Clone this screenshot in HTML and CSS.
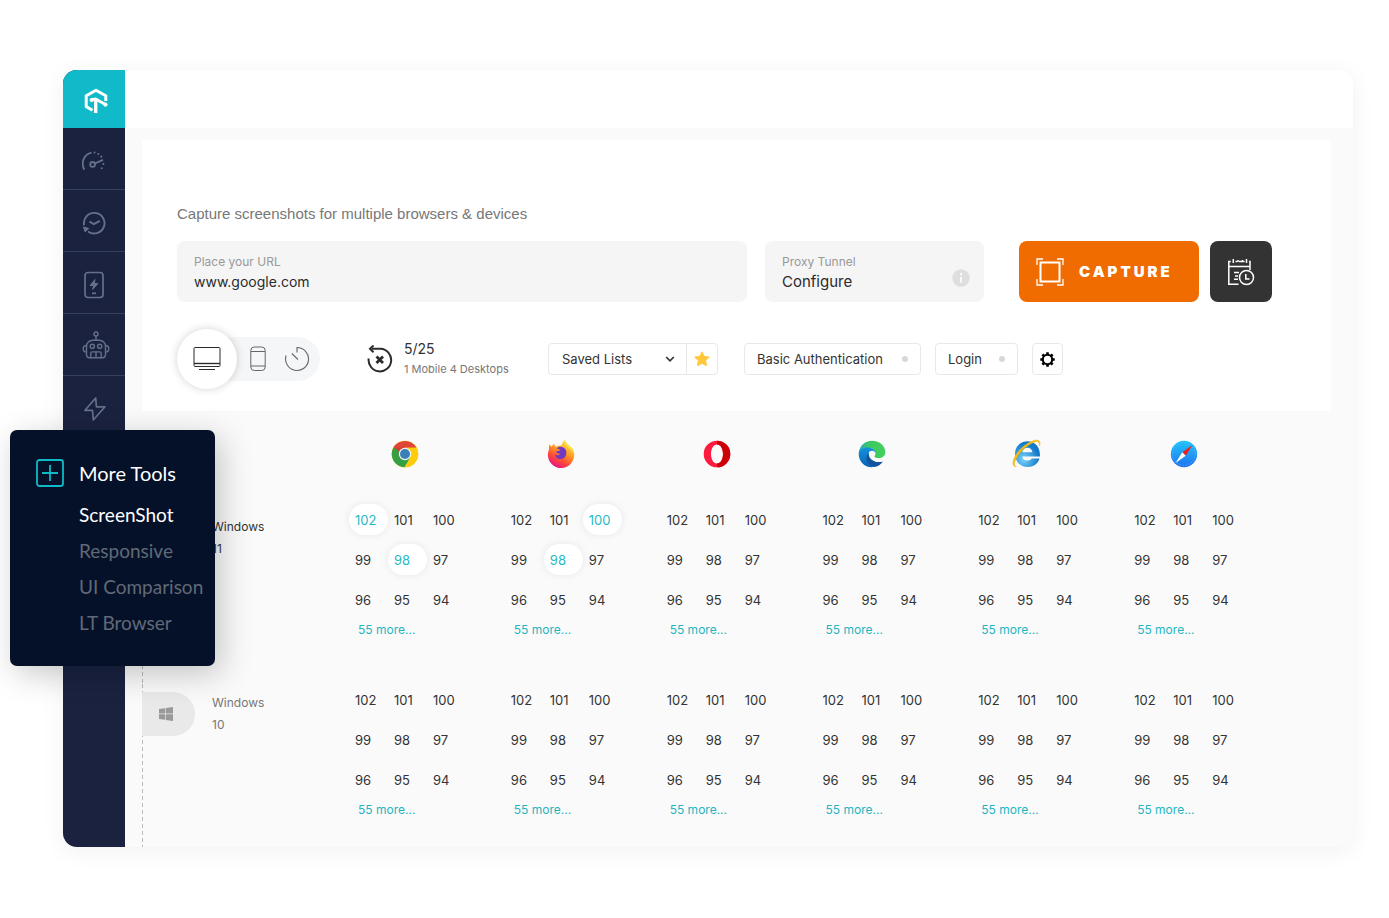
FILE: index.html
```html
<!DOCTYPE html>
<html lang="en">
<head>
<meta charset="utf-8">
<meta name="viewport" content="width=device-width, initial-scale=1">
<title>Screenshot capture</title>
<link rel="stylesheet" href="styles.css">
</head>
<body>
<div class="app">
  <aside class="sidebar">
    <a class="brand" href="#" aria-label="Home">
      <svg width="24" height="26" viewBox="0 0 24 26" fill="none" stroke="#fff" stroke-width="3" stroke-linejoin="round">
        <path d="M8.500 22.300 2.200 18.600V7.700L12 2.200l9.800 5.500v5.300" />
        <path d="M11.700 25V12.500" stroke-width="3.400"/>
        <path d="M7.300 12 11.700 11l9.300 5.300" stroke-width="3"/>
        <circle cx="7.600" cy="12" r="1.600" fill="#fff" stroke-width="1"/>
        <circle cx="21.400" cy="16.600" r="1.700" fill="#fff" stroke-width="1"/>
      </svg>
    </a>
    <nav class="rail">
      <a class="rail-item" href="#" aria-label="Dashboard">
        <svg width="24" height="20" viewBox="1 0 24 20" fill="none" stroke="currentColor" stroke-width="1.800" stroke-linecap="round">
          <path d="M3 18C-.2 11.500 3 3.500 9.800 1.800"/>
          <path d="M13.500 1.400v.1M17.300 2.900v.1M20.300 5.600v.1M22.400 13v.1M20.700 17.200v.1" stroke-width="2"/>
          <circle cx="11.600" cy="13.400" r="2.400"/>
          <path d="m14 12.400 7.500-3.200"/>
        </svg>
      </a>
      <a class="rail-item" href="#" aria-label="Real time testing">
        <svg width="24" height="24" viewBox="0 0 24 24" fill="none" stroke="currentColor" stroke-width="1.900">
          <path d="M2.100 14.200A10.300 10.300 0 1 1 6 20.400"/>
          <path d="m7.500 10.500 4.300 2.700 6-3.400" stroke-width="2"/>
          <path d="m1.500 16 5.300 1.500-3.800 3.300z" fill="currentColor" stroke-width="1"/>
        </svg>
      </a>
      <a class="rail-item" href="#" aria-label="App testing">
        <svg width="20" height="28" viewBox="0 0 20 28" fill="none" stroke="currentColor" stroke-width="1.700">
          <rect x="1" y="1.500" width="18" height="25" rx="3"/>
          <path d="m11 8.500-5 6h3.500l-.8 4 5.200-6H10.300z" fill="currentColor" stroke-width="1"/>
          <path d="M8 22.300h4"/>
        </svg>
      </a>
      <a class="rail-item" href="#" aria-label="Automation">
        <svg width="32" height="32" viewBox="0 0 32 32" fill="none" stroke="currentColor" stroke-width="1.400">
          <g transform="translate(4 0)">
            <circle cx="14" cy="3" r="2"/>
            <path d="M14 5v4M4.500 24V15.500a6.300 6.300 0 0 1 6.300-6.300h6.400a6.300 6.300 0 0 1 6.300 6.300v8.200a3 3 0 0 1-3 3h-13a3 3 0 0 1-3-3"/>
            <path d="M4.500 14.500c-2 0-3.300 1-3.300 3.200s1.300 3.300 3.300 3.300M23.500 14.500c2 0 3.300 1 3.300 3.200S25.500 21 23.500 21"/>
            <circle cx="10.300" cy="15.300" r="2.100"/><circle cx="17.700" cy="15.300" r="2.100"/>
            <path d="M8.800 26.500v-4.300c0-.8.500-1.300 1.300-1.300h7.800c.8 0 1.300.5 1.300 1.300v4.300M14 21v5.500"/>
          </g>
        </svg>
      </a>
      <a class="rail-item" href="#" aria-label="HyperExecute">
        <svg width="24" height="26" viewBox="-1 0 24 26" fill="none" stroke="currentColor" stroke-width="1.700" stroke-linejoin="round">
          <path d="M12.700 2 2 14.300h7.500L10.300 24 22 10.800h-8.600z"/>
        </svg>
      </a>
    </nav>
    <section class="flyout">
      <svg class="flyout-icon" width="28" height="28" viewBox="0 0 28 28" fill="none" stroke="#0ebac5" stroke-width="1.800">
        <rect x="1" y="1" width="26" height="26" rx="2.500"/>
        <path d="M14 6v16M6 14h16"/>
      </svg>
      <h2 class="flyout-title">More Tools</h2>
      <nav class="flyout-links">
        <a class="flyout-link is-current" href="#">ScreenShot</a>
        <a class="flyout-link" href="#">Responsive</a>
        <a class="flyout-link" href="#">UI Comparison</a>
        <a class="flyout-link" href="#">LT Browser</a>
      </nav>
    </section>
  </aside>

  <div class="main">
    <header class="topbar"></header>
    <main class="content">
      <form class="panel">
        <p class="panel-title">Capture screenshots for multiple browsers &amp; devices</p>
        <div class="capture-row">
          <div class="field field-url">
            <label class="field-label" for="url">Place your URL</label>
            <input class="field-input" id="url" type="text" value="www.google.com">
          </div>
          <div class="field field-proxy">
            <div class="field-body">
              <label class="field-label" for="proxy">Proxy Tunnel</label>
              <button class="field-input" id="proxy" type="button">Configure</button>
            </div>
            <svg width="18" height="18" viewBox="0 0 18 18" aria-hidden="true">
              <circle cx="9" cy="9" r="8.700" fill="#dededf"/>
              <path d="M9 7.800v6" stroke="#fff" stroke-width="1.600"/><circle cx="9" cy="5.200" r="1.100" fill="#fff"/>
            </svg>
          </div>
          <button class="capture" type="button">
            <svg width="28" height="28" viewBox="0 0 28 28" fill="none" stroke="#fff">
              <rect x="4.500" y="4.500" width="19" height="19" stroke-width="2"/>
              <path d="M1 7V1h6M21 1h6v6M27 21v6h-6M7 27H1v-6" stroke-width="1.300"/>
            </svg>
            <span>CAPTURE</span>
          </button>
          <button class="schedule" type="button" aria-label="Schedule">
            <svg width="28" height="28" viewBox="0 0 28 28" fill="none" stroke="#fff" stroke-width="1.500">
              <path d="M11.500 26.200H1.800V3.500h2M22 3.500h1v8.500M1.800 8.500h21M8.500 3.500h2M12 3.500h5.500"/>
              <path d="M6.300 1v4M11 2v2M15.500 2v2M19.500 1v4"/>
              <path d="M7 14.500h5M8 18h3M7 21.300h4"/>
              <circle cx="19.500" cy="19.500" r="7"/>
              <path d="M18.800 16v5h3.700"/>
            </svg>
          </button>
        </div>

        <div class="options-row">
          <div class="devices">
            <button class="device is-active" type="button" aria-label="Desktop" aria-pressed="true">
              <svg width="28" height="26" viewBox="0 0 28 26" fill="none" stroke="#2b2b2b">
                <rect x="1" y="1.500" width="26" height="19" rx="1"/>
                <path d="M1 17.500h26" stroke-width="1.400"/><path d="M6 23.500h16" stroke-width="1"/>
              </svg>
            </button>
            <button class="device" type="button" aria-label="Mobile">
              <svg width="16" height="26" viewBox="0 0 16 26" fill="none" stroke="#666">
                <rect x=".8" y="1" width="14.400" height="23.500" rx="3.500"/><path d="M1 5.500h14M1 20h14"/>
              </svg>
            </button>
            <button class="device" type="button" aria-label="Timer">
              <svg width="26" height="26" viewBox="0 0 26 26" fill="none" stroke="#666" stroke-width="1.100">
                <path d="M13 6.500V1.500A11.500 11.500 0 1 1 2.100 9.500M7.800 7.500l6.200 6"/>
              </svg>
            </button>
          </div>

          <div class="quota">
            <svg width="26" height="28" viewBox="0 0 26 28" fill="none" stroke="#2b2b2b" stroke-width="2">
              <path d="M5 3.800h8.500a11.300 11.300 0 1 1-11.800 9.700"/>
              <path d="M6.500.500 3 3.800l3.500 3.400"/>
              <path d="m9.500 11.500 6.500 6.500M16 11.500 9.500 18" stroke-width="2.800"/>
            </svg>
            <div class="quota-text">
              <span class="quota-count">5/25</span>
              <span class="quota-detail">1 Mobile 4 Desktops</span>
            </div>
          </div>

          <div class="saved">
            <select class="saved-select" aria-label="Saved Lists"><option>Saved Lists</option></select>
            <svg class="saved-arrow" width="10" height="8" viewBox="0 0 10 8" fill="none" stroke="#333" stroke-width="1.700"><path d="m1.200 2 3.800 3.800L8.800 2"/></svg>
            <button class="saved-star" type="button" aria-label="Favourite">
              <svg width="16" height="16" viewBox="0 0 16 16" fill="#ffc83c" stroke="#ffc83c" stroke-linejoin="round"><path d="m8 .8 2.200 4.600 5.100.7-3.700 3.500.9 5.100L8 12.300l-4.500 2.400.9-5.100L.7 6.100l5.100-.7z"/></svg>
            </button>
          </div>

          <button class="chip" type="button">Basic Authentication<span class="dot"></span></button>
          <button class="chip chip-login" type="button">Login<span class="dot"></span></button>
          <button class="gear" type="button" aria-label="Settings">
            <svg width="15" height="15" viewBox="0 0 16 16" fill="none" stroke="#000">
              <circle cx="8" cy="8" r="5" stroke-width="2.200"/>
              <path d="M8 .3v3M8 12.700v3M.3 8h3M12.700 8h3M2.600 2.600l1.900 1.900M11.500 11.500l1.900 1.900M13.400 2.600l-1.900 1.900M4.500 11.500l-1.900 1.900" stroke-width="2.800"/>
            </svg>
          </button>
        </div>
      </form>

      <table class="matrix">
        <thead>
          <tr>
            <th class="col-os"></th>
            <th scope="col" aria-label="Chrome">
              <svg class="browser" width="28" height="28" viewBox="0 0 28 28">
                <circle cx="14" cy="14" r="13.300" fill="#fdcc0d"/>
                <path d="M14 14 2.500 7.300A13.300 13.300 0 0 1 25.500 7.700H14z" fill="#e0453a"/>
                <path d="M2.500 7.300A13.300 13.300 0 0 0 13.600 27.300L19.500 17.200 14 14l-5.500 3.200z" fill="#34a045"/>
                <path d="M2.500 7.300 8.500 17.200 14 7.700H2.800z" fill="#d93a30"/>
                <path d="M2.500 7.300 8.500 17.300 11 18 7 10z" fill="#2f9a41"/>
                <path d="M14 7.700h11.600a13.300 13.300 0 0 1-12 19.600l5.900-10z" fill="#fdcc0d"/>
                <circle cx="14" cy="14" r="6.200" fill="#eef3f6"/><circle cx="14" cy="14" r="5" fill="#3b7fb8"/>
              </svg>
            </th>
            <th scope="col" aria-label="Firefox">
              <svg class="browser" width="28" height="28" viewBox="0 0 28 28">
                <defs><linearGradient id="fx" x1=".85" y1=".1" x2=".35" y2="1"><stop offset="0" stop-color="#ffe34a"/><stop offset=".4" stop-color="#ff9a24"/><stop offset=".7" stop-color="#ff4a38"/><stop offset="1" stop-color="#e31587"/></linearGradient></defs>
                <path d="M2.300 3.500c1 .5 1.800 1.300 2.500 2.200.4-1.200 1.200-2.200 2.300-3 .2 1.500 1 2.500 2.300 3 1.700-1.200 3.600-1.500 5.400-1.200C15 2.300 16 .5 18-1c.5 2.500 2 3.700 3.600 5.200C25.600 7.300 27.200 9.500 27.200 13A13.200 13.200 0 1 1 2 8.500C2 6.700 2 5.200 2.300 3.500z" transform="translate(0 1)" fill="url(#fx)"/>
                <path d="M9.500 8.500c2.500-2.500 7-2.200 9 1 1.800 3.200.7 8-3 9.200-4 1.200-7.200-1.200-7.500-4.200 1.700 1.200 4 1 5.500-.5-2.500-.3-3.500-1.500-4.800-1.800.3-1.500 2.500-1.500 4.500-1.800-.5-1.200-2-2-3.700-1.900z" fill="#7139c4"/>
                <path d="M18 0c.5 2.500 2 3.700 3.600 5.200 4 3.100 5.600 5.300 5.600 8.800-1.500-2.500-3.500-4.500-6.500-6.500-3.200-2-3.500-5-2.700-7.500z" fill="#ffdf3f"/>
              </svg>
            </th>
            <th scope="col" aria-label="Opera">
              <svg class="browser" width="28" height="28" viewBox="0 0 28 28">
                <path fill-rule="evenodd" d="M14 .700a13.300 13.300 0 0 1 0 26.600A13.300 13.300 0 0 1 14 .700zm0 3.800c-3.600 0-6 4.200-6 9.500s2.400 9.500 6 9.500 6-4.200 6-9.500-2.400-9.500-6-9.500z" fill="#ff1b3d"/>
                <path fill-rule="evenodd" d="M14 .700a13.300 13.300 0 0 1 0 26.600V23.500c3.600 0 6-4.200 6-9.500s-2.400-9.500-6-9.500z" fill="#cc0006"/>
              </svg>
            </th>
            <th scope="col" aria-label="Edge">
              <svg class="browser" width="28" height="28" viewBox="0 0 28 28">
                <defs>
                  <linearGradient id="eg" x1="0" y1=".5" x2="1" y2=".5"><stop offset="0" stop-color="#22a9c9"/><stop offset=".35" stop-color="#38c765"/><stop offset="1" stop-color="#43d15b"/></linearGradient>
                  <linearGradient id="eb" x1="0" y1="0" x2="0" y2="1"><stop offset="0" stop-color="#1592dc"/><stop offset="1" stop-color="#0a62b4"/></linearGradient>
                </defs>
                <path d="M.700 13C1.300 6 7 .700 14 .700c8 0 13.300 5.500 13.300 11.300 0 4-3 6-6.500 6-3 0-4.500-1-4.500-1.800s1.200-1.200 1.200-3.200c0-3-3-5-7.500-5C5 8 2 10 .700 13z" fill="url(#eg)"/>
                <path d="M.700 14C.700 10 4.500 7.600 9.500 7.600c5 0 8 2.700 8 5.400h-3c-3 0-4.700 2.500-4.700 5.500 0 4 3 7.500 6 8.600C7 28.200.700 21.800.700 14z" fill="url(#eb)"/>
                <path d="M10.300 13c-2.500 3.500-2.300 8 .7 11 1.600 2 3.500 3 4.800 3.100 4-.4 7.500-2.800 9.400-6.200-4 1.900-8 1.500-10.700-.8-2-1.700-3-4-4.200-7.100z" fill="#11539e"/>
                <path d="M10.800 14a3.200 3.200 0 0 1 6.400 0c0 1.300-1.200 1.800-1.200 3 0 1.400 2 2.400 5 2.400 2.200 0 4.500-.6 6-1.500l-.8 3c-3.500 1.300-7.700 1.200-11-.4-3-1.500-4.400-3.700-4.400-6.500z" fill="#fafafa"/>
              </svg>
            </th>
            <th scope="col" aria-label="Internet Explorer">
              <svg class="browser browser-ie" width="28" height="28" viewBox="0 0 28 28">
                <defs><radialGradient id="ie" cx=".35" cy=".7" r=".6"><stop offset="0" stop-color="#79d3fb"/><stop offset="1" stop-color="#1379ca"/></radialGradient></defs>
                <path fill-rule="evenodd" d="M15.500 1.200c7.500 0 12.800 5.500 12.500 15.300H10.300c.3 2.500 2.300 4 5.200 4 2 0 3.500-.8 4.300-2h7.700c-1.500 5.200-6 8.500-12 8.500-7 0-12.500-5.500-12.500-12.900s5.500-12.900 12.500-12.900zM10.400 12.300h10c-.4-2.800-2.300-4.500-5-4.500s-4.600 1.900-5 4.500z" fill="url(#ie)"/>
                <path d="M27.500 5.500C29 2 27-.2 24 .2 17 1 6 9.500 2.300 18c-2.400 5.700-1.300 9 2 8.500C1.500 26 2 22.500 4.500 18 8.500 10.500 17 3.200 24 1.600c2.700-.6 3.700.9 3.500 3.900z" fill="#f6b911" stroke="#f6b911" stroke-width=".7"/>
              </svg>
            </th>
            <th scope="col" aria-label="Safari">
              <svg class="browser" width="28" height="28" viewBox="0 0 28 28">
                <defs><linearGradient id="sf" x1="0" y1="0" x2="0" y2="1"><stop offset="0" stop-color="#20c5fb"/><stop offset="1" stop-color="#2272ef"/></linearGradient></defs>
                <circle cx="14" cy="14" r="13.200" fill="url(#sf)"/>
                <circle cx="14" cy="14" r="11.300" fill="none" stroke="#5cb8fa" stroke-width="1" stroke-dasharray="1 2"/>
                <path d="M22.500 5 12.300 12.300l3.400 3.400z" fill="#f01f1f"/><path d="m5.500 23 10.200-7.300-3.400-3.400z" fill="#fff"/>
              </svg>
            </th>
          </tr>
        </thead>
        <tbody>
          <tr class="os-row" data-selected="0:102 0:98 1:100 1:98">
            <th class="col-os" scope="row"><div class="os is-open"><span class="os-tab"></span><span class="os-name">Windows 11</span></div></th>
          </tr>
          <tr class="os-row" data-selected="">
            <th class="col-os" scope="row"><div class="os">
              <span class="os-tab">
                <svg width="14" height="14" viewBox="0 0 14 14" fill="#999"><path d="M0 2 6 1.200v5.400H0zM6.700 1.100 14 0v6.600H6.700zM0 7.300h6v5.500L0 12zM6.700 7.300H14V14l-7.300-1.100z"/></svg>
              </span>
              <span class="os-name">Windows 10</span></div></th>
          </tr>
        </tbody>
      </table>
    </main>
  </div>
</div>
<script src="script.js"></script>
</body>
</html>
```
FILE: styles.css
```css
* { box-sizing: border-box; }

body {
  margin: 0;
  padding: 70px 36px 71px 63px;
  background: #fff;
  color: #333;
  font-family: Inter, "Liberation Sans", sans-serif;
  font-size: 13px;
}

button, input, select { font: inherit; color: inherit; }
button { padding: 0; border: 0; background: none; cursor: pointer; }
a { text-decoration: none; }
svg { display: block; flex: none; }

.app {
  display: flex;
  border-radius: 14px;
  background: #fafafa;
  box-shadow: 0 4px 24px rgba(0, 0, 0, 0.06);
}

/* Sidebar */
.sidebar {
  position: relative;
  flex: none;
  width: 62px;
  border-radius: 14px 0 0 14px;
  background: #1a2240;
}
.brand {
  display: flex;
  align-items: center;
  justify-content: center;
  height: 58px;
  padding: 4px 0 0 3px;
  border-radius: 14px 0 0 0;
  background: #10bac8;
}
.rail-item {
  display: flex;
  align-items: center;
  justify-content: center;
  height: 62px;
  padding-top: 4px;
  border-bottom: 1px solid #35405a;
  color: #657186;
}
.rail-item:last-child { border-bottom: 0; }

/* Tools menu that opens over the sidebar */
.flyout {
  position: absolute;
  z-index: 2;
  top: 360px;
  left: -53px;
  display: grid;
  grid-template-columns: 28px 1fr;
  gap: 9px 15px;
  align-items: center;
  width: 205px;
  padding: 28px 0 25px 26px;
  border-radius: 7px;
  background: #051129;
  box-shadow: 6px 8px 32px rgba(0, 0, 0, 0.22);
  font-family: Lato, sans-serif;
}
.flyout-title {
  margin: 0;
  color: #fff;
  font-size: 20px;
  font-weight: 400;
  line-height: 30px;
}
.flyout-links { grid-column: 2; display: grid; }
.flyout-link {
  color: #616977;
  font-size: 19px;
  line-height: 36px;
  white-space: nowrap;
}
.flyout-link.is-current { color: #fff; }

/* Capture form */
.main { flex: 1; min-width: 0; }
.topbar {
  height: 58px;
  border-radius: 0 14px 0 0;
  background: #fff;
}
.content { padding: 12px 22px 0 17px; }
.panel {
  padding: 62px 59px 22px 35px;
  background: #fff;
}
.panel-title {
  margin: 0 0 15px;
  color: #777;
  font-family: "Liberation Sans", Arial, sans-serif;
  font-size: 15px;
  line-height: 24px;
}
.capture-row { display: flex; }
.field {
  height: 61px;
  padding: 11px 17px;
  border-radius: 8px;
  background: #f5f5f5;
}
.field-url { flex: 1; margin-right: 18px; }
.field-proxy {
  display: flex;
  align-items: center;
  justify-content: space-between;
  width: 219px;
  padding-right: 14px;
  margin-right: 35px;
}
.field-proxy > svg { margin-top: 13px; }
.field-proxy .field-input { font-size: 15px; }
.field-label {
  display: block;
  color: #999;
  font-size: 12px;
  line-height: 20px;
}
.field-input {
  display: block;
  width: 100%;
  padding: 0;
  border: 0;
  background: none;
  color: #2b2b2b;
  font-size: 14px;
  line-height: 20px;
  text-align: left;
}
.capture {
  display: flex;
  align-items: center;
  gap: 15px;
  width: 180px;
  height: 61px;
  padding-left: 17px;
  margin-right: 11px;
  border-radius: 8px;
  background: #f06c00;
  color: #fff;
  font-size: 15px;
  font-weight: 900;
  letter-spacing: 3px;
}
.schedule {
  display: grid;
  place-items: center;
  width: 62px;
  height: 61px;
  border-radius: 8px;
  background: #333;
}

.options-row {
  display: flex;
  align-items: center;
  height: 60px;
  margin-top: 27px;
}
.devices {
  display: flex;
  align-items: center;
  gap: 18px;
  width: 143px;
  height: 44px;
  margin-right: 47px;
  border-radius: 22px;
  background: #f5f6f8;
}
.device.is-active {
  display: grid;
  place-items: center;
  width: 60px;
  height: 60px;
  margin-right: -5px;
  border-radius: 50%;
  background: #fff;
  box-shadow: 0 0 9px rgba(0, 0, 0, 0.18);
}
.quota { display: flex; align-items: center; gap: 11px; width: 181px; }
.quota-text { display: grid; }
.quota-count { font-size: 14px; line-height: 20px; }
.quota-detail { color: #777; font-size: 11px; line-height: 20px; white-space: nowrap; }

.saved {
  display: flex;
  align-items: center;
  width: 170px;
  height: 32px;
  margin-right: 26px;
  border: 1px solid #e8e8e8;
  border-radius: 4px;
}
.saved-select {
  appearance: none;
  flex: 1;
  width: 0;
  height: 30px;
  padding: 0 0 0 13px;
  margin-right: -20px;
  border: 0;
  background: none;
}
.saved-arrow { width: 10px; margin-right: 11px; pointer-events: none; }
.saved-star {
  display: grid;
  place-items: center;
  width: 31px;
  height: 30px;
  border-left: 1px solid #e8e8e8;
}
.chip {
  display: flex;
  align-items: center;
  justify-content: space-between;
  width: 177px;
  height: 32px;
  padding: 0 12px;
  margin-right: 14px;
  border: 1px solid #e8e8e8;
  border-radius: 4px;
}
.chip-login { width: 83px; }
.dot { width: 6px; height: 6px; border-radius: 50%; background: #d6d8db; }
.gear {
  display: grid;
  place-items: center;
  width: 31px;
  height: 32px;
  border: 1px solid #e8e8e8;
  border-radius: 4px;
}

/* Browser and version table */
.matrix {
  width: calc(100% - 47px);
  border-collapse: collapse;
  table-layout: fixed;
}
.matrix th, .matrix td {
  padding: 0;
  font-weight: 400;
  text-align: left;
  vertical-align: top;
}
.matrix .col-os { width: 207px; }
.browser { margin: 29px 0 36px 42px; }
.browser-ie { margin-left: 40px; overflow: visible; }
.os-row .col-os {
  background: repeating-linear-gradient(#bbb 0 4px, transparent 4px 7px) left top / 1px 100% no-repeat;
}
.os { display: flex; gap: 17px; padding-top: 8px; color: #777; }
.os.is-open { padding-top: 12px; color: #333; }
.os-tab {
  display: flex;
  align-items: center;
  width: 53px;
  height: 44px;
  padding-left: 17px;
  border-radius: 0 22px 22px 0;
  background: #e9e9e9;
}
.os-name { width: 60px; font-size: 12px; line-height: 22px; }
.versions {
  display: grid;
  grid-template-columns: repeat(3, 39px);
  gap: 9px 0;
}
.version {
  height: 31px;
  padding-left: 6px;
  border-radius: 16px;
  text-align: left;
}
.version.is-selected {
  background: #fff;
  box-shadow: 0 0 8px rgba(0, 0, 0, 0.08);
  color: #1fbac5;
}
.more {
  display: inline-block;
  margin: 5px 0 44px 9px;
  color: #1fb5c1;
  font-size: 12px;
  line-height: 20px;
}
.os-row:last-child .more { margin-bottom: 27px; }
```
FILE: script.js
```js
const versions = [102, 101, 100, 99, 98, 97, 96, 95, 94];
const browserCount = 6;

document.querySelectorAll('.os-row').forEach((row) => {
  const selected = row.dataset.selected.split(' ');
  for (let b = 0; b < browserCount; b++) {
    const cell = document.createElement('td');
    const grid = document.createElement('div');
    grid.className = 'versions';
    versions.forEach((v) => {
      const button = document.createElement('button');
      button.type = 'button';
      button.className = 'version';
      button.textContent = v;
      if (selected.includes(b + ':' + v)) {
        button.classList.add('is-selected');
        button.setAttribute('aria-pressed', 'true');
      }
      grid.append(button);
    });
    const more = document.createElement('a');
    more.className = 'more';
    more.href = '#';
    more.textContent = '55 more...';
    cell.append(grid, more);
    row.append(cell);
  }
});
```
